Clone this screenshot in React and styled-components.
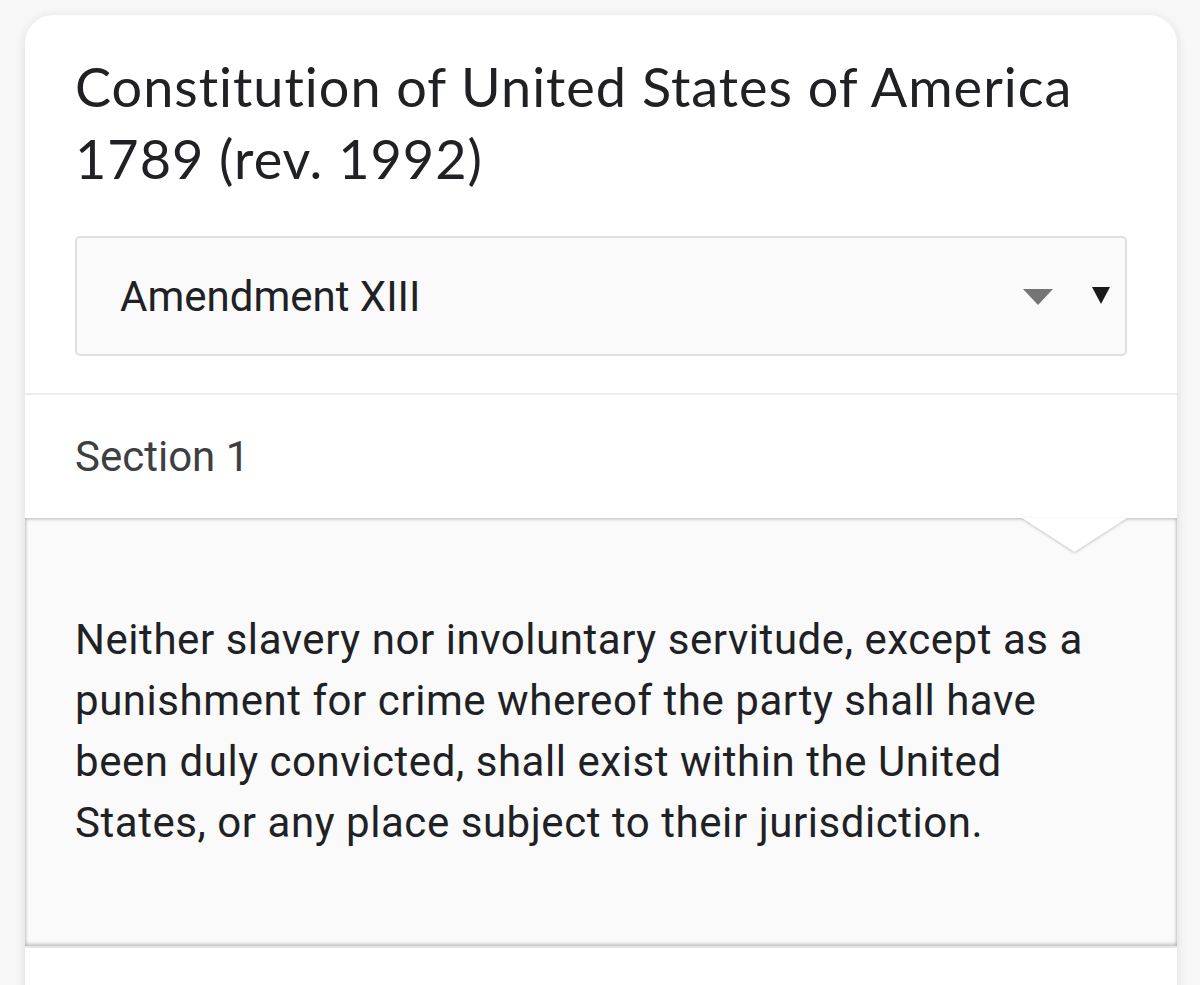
import React from 'react'
import styled, { createGlobalStyle } from 'styled-components'

const GlobalStyle = createGlobalStyle`
  html, body {
    margin: 0;
    padding: 0;
    background: #f8f8f8;
    overflow: hidden;
  }
  body {
    font-family: Roboto, "Liberation Sans", sans-serif;
  }
`

const Page = styled.div`
  padding: 15px 0 0 25px;
  height: 970px;
`

const Card = styled.div`
  width: 1152px;
  background: #fff;
  border-radius: 28px 28px 0 0;
  box-shadow: 0 2px 12px rgba(0, 0, 0, 0.12);
  overflow: hidden;
`

const Header = styled.div`
  padding: 36px 50px 37px;
  border-bottom: 2px solid #ececec;
`

const Title = styled.h1`
  margin: 0;
  font-family: Lato, "Open Sans", sans-serif;
  font-weight: 400;
  font-size: 54px;
  letter-spacing: 1px;
  font-variant-ligatures: none;
  line-height: 72px;
  color: #202124;
`

const Select = styled.div`
  margin-top: 41px;
  height: 120px;
  box-sizing: border-box;
  display: flex;
  align-items: center;
  padding: 0 15px 0 43px;
  background: #fafafa;
  border: 2px solid #e0e0e0;
  border-radius: 5px;
`

const SelectLabel = styled.span`
  flex: 1;
  font-size: 42px;
  color: #202124;
`

const Arrows = styled.div`
  display: flex;
  align-items: center;
  gap: 39px;
`

const Triangle = styled.span`
  width: 0;
  height: 0;
  border-left: ${p => p.$w / 2}px solid transparent;
  border-right: ${p => p.$w / 2}px solid transparent;
  border-top: ${p => p.$h}px solid ${p => p.$color};
  margin-top: ${p => p.$offset}px;
`

const SectionRow = styled.div`
  height: 123px;
  display: flex;
  align-items: center;
  padding: 0 50px;
  font-size: 42px;
  color: #3c4043;
`

const Panel = styled.div`
  position: relative;
  background: #fafafa;
  padding: 91px 50px 93px;
  box-shadow: inset 0 2px 3px rgba(0, 0, 0, 0.14),
    inset 2px 0 3px rgba(0, 0, 0, 0.08),
    inset -2px 0 3px rgba(0, 0, 0, 0.08),
    inset 0 -3px 3px rgba(0, 0, 0, 0.14);
  border-bottom: 2px solid #e6e6e6;
`

const NotchShadow = styled.div`
  position: absolute;
  top: 0;
  left: 997px;
  width: 105px;
  height: 34px;
  filter: drop-shadow(0 1px 1.5px rgba(0, 0, 0, 0.22));
`

const Notch = styled.div`
  width: 100%;
  height: 100%;
  background: #fff;
  clip-path: polygon(0 0, 100% 0, 50% 100%);
`

const Body = styled.p`
  margin: 0;
  font-size: 42px;
  letter-spacing: 0.55px;
  line-height: 61px;
  color: #202124;
`

const NextRow = styled.div`
  height: 60px;
`

export default function App() {
  return (
    <>
      <GlobalStyle />
      <Page>
        <Card>
          <Header>
            <Title>Constitution of United States of America 1789 (rev. 1992)</Title>
            <Select>
              <SelectLabel>Amendment XIII</SelectLabel>
              <Arrows>
                <Triangle $w={30} $h={16} $color="#757575" $offset={2} />
                <Triangle $w={18} $h={17} $color="#1a1a1a" $offset={-2} />
              </Arrows>
            </Select>
          </Header>
          <SectionRow>Section 1</SectionRow>
          <Panel>
            <NotchShadow>
              <Notch />
            </NotchShadow>
            <Body>
              Neither slavery nor involuntary servitude, except as a punishment for crime
              whereof the party shall have been duly convicted, shall exist within the
              United States, or any place subject to their jurisdiction.
            </Body>
          </Panel>
          <NextRow />
        </Card>
      </Page>
    </>
  )
}
